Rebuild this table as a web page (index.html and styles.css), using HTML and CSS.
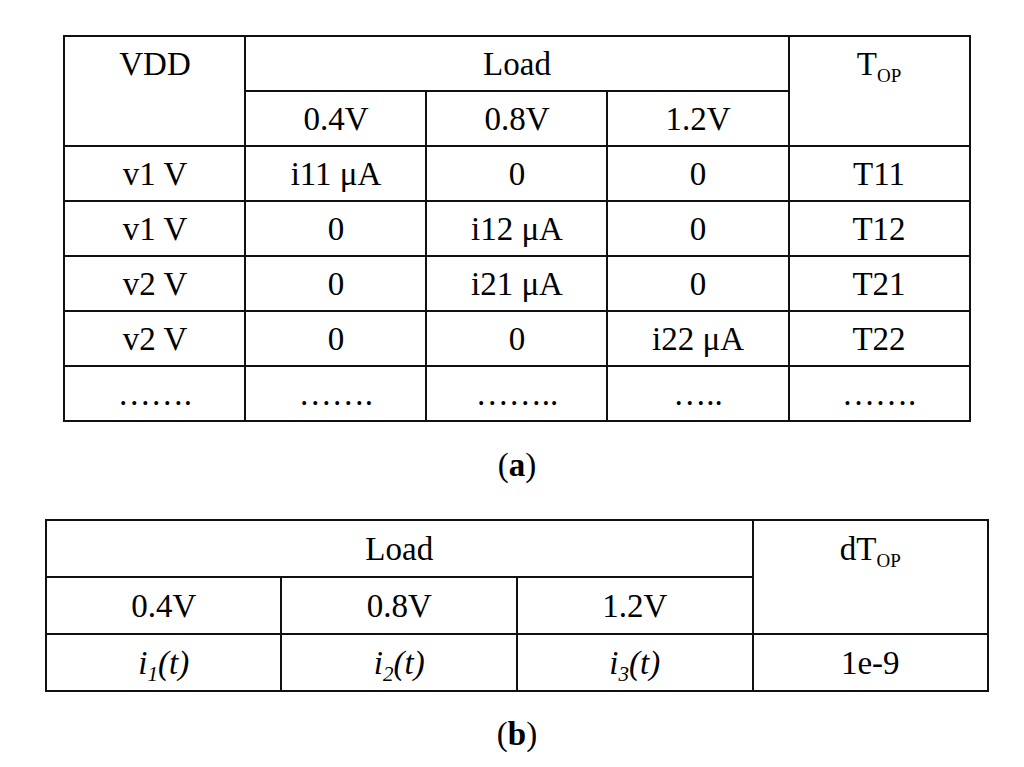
FILE: index.html
```html
<!DOCTYPE html>
<html>
<head>
<meta charset="utf-8">
<link rel="stylesheet" href="styles.css">
</head>
<body>
<div class="page">
  <table class="grid grid-a">
    <colgroup><col class="ca"><col class="ca"><col class="ca"><col class="ca"><col class="ca"></colgroup>
    <tr>
      <td rowspan="2">VDD</td>
      <td colspan="3">Load</td>
      <td rowspan="2">T<sub>OP</sub></td>
    </tr>
    <tr><td>0.4V</td><td>0.8V</td><td>1.2V</td></tr>
    <tr><td>v1 V</td><td>i11 μA</td><td>0</td><td>0</td><td>T11</td></tr>
    <tr><td>v1 V</td><td>0</td><td>i12 μA</td><td>0</td><td>T12</td></tr>
    <tr><td>v2 V</td><td>0</td><td>i21 μA</td><td>0</td><td>T21</td></tr>
    <tr><td>v2 V</td><td>0</td><td>0</td><td>i22 μA</td><td>T22</td></tr>
    <tr><td>…….</td><td>…….</td><td>……..</td><td>…..</td><td>…….</td></tr>
  </table>
  <p class="caption caption-a">(<b>a</b>)</p>
  <table class="grid grid-b">
    <colgroup><col class="cb"><col class="cb"><col class="cb"><col class="cb"></colgroup>
    <tr>
      <td colspan="3">Load</td>
      <td rowspan="2">dT<sub>OP</sub></td>
    </tr>
    <tr><td>0.4V</td><td>0.8V</td><td>1.2V</td></tr>
    <tr><td><i>i<sub>1</sub>(t)</i></td><td><i>i<sub>2</sub>(t)</i></td><td><i>i<sub>3</sub>(t)</i></td><td>1e-9</td></tr>
  </table>
  <p class="caption caption-b">(<b>b</b>)</p>
</div>
</body>
</html>
```

FILE: styles.css
```css
html, body {
  margin: 0;
  padding: 0;
  background: #fff;
}
body {
  width: 1024px;
  height: 767px;
  overflow: hidden;
  font-family: "Liberation Serif", "Times New Roman", serif;
  color: #000;
}
.page {
  display: flex;
  flex-direction: column;
  align-items: center;
  padding-left: 10px;
  padding-top: 35px;
}
.grid {
  border-collapse: collapse;
  table-layout: fixed;
  font-size: 33px;
  line-height: 36px;
}
.grid td {
  border: 2px solid #111;
  text-align: center;
  vertical-align: top;
  padding: 9px 0 0 0;
  white-space: nowrap;
}
.grid-a { width: 906px; }
.grid-a tr { height: 55px; }
.ca { width: 181px; }
.grid-b { width: 943px; }
.grid-b tr { height: 57px; }
.cb { width: 235.5px; }
.grid-b td { padding-top: 10px; }
.grid sub {
  font-size: 19px;
  vertical-align: -7px;
  line-height: 0;
}
.grid i sub {
  font-size: 21px;
  vertical-align: -7px;
}
.caption {
  margin: 0;
  font-size: 33px;
  line-height: 36px;
}
.caption b { font-weight: 700; }
.caption-a { margin-top: 25px; margin-bottom: 36px; }
.caption-b { margin-top: 24px; }
```
